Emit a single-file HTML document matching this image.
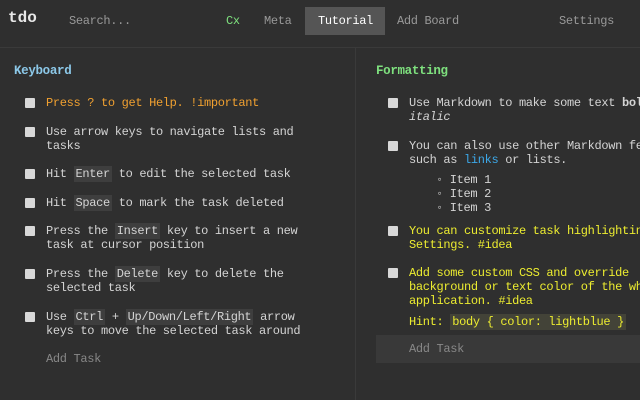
<!DOCTYPE html><html><head><style>
body{margin:0;width:640px;height:400px;background:#2f2f2f;overflow:hidden;font-family:"Liberation Mono",monospace;font-size:12px;letter-spacing:-0.33px;color:#d4d4d4;position:relative}
.a{position:absolute;white-space:pre;line-height:14px}
.cb{position:absolute;width:10px;height:10px;background:#d8d8d8;border-radius:1px}
code{background:#3e3e3e;font-family:inherit;padding:1px 2px}
.o{color:#f0a030}.y{color:#ecec30}.g{color:#888}
</style></head><body>
<div style="position:absolute;left:0;top:47px;width:640px;height:1px;background:#3a3a3a"></div>
<div style="position:absolute;left:355px;top:48px;width:1px;height:352px;background:#3a3a3a"></div>
<div class="a" style="left:8px;top:11px;font-size:16px;font-weight:bold;color:#e8e8e8;letter-spacing:0">tdo</div>
<div class="a" style="left:69px;top:14px;color:#999">Search...</div>
<div class="a" style="left:226px;top:14px;color:#7ee07e">Cx</div>
<div class="a" style="left:264px;top:14px;color:#999">Meta</div>
<div style="position:absolute;left:305px;top:7px;width:80px;height:28px;background:#555"></div>
<div class="a" style="left:318px;top:14px;color:#fff">Tutorial</div>
<div class="a" style="left:397px;top:14px;color:#999">Add Board</div>
<div class="a" style="left:559px;top:14px;color:#999">Settings</div>
<div class="a" style="left:14px;top:64px;color:#8cc8e8;font-weight:bold;font-size:12.5px">Keyboard</div>
<div class="a" style="left:376px;top:64px;color:#7ee07e;font-weight:bold;font-size:12.5px">Formatting</div>

<div class="cb" style="left:25px;top:98px"></div><div class="a o" style="left:46px;top:96px">Press ? to get Help. !important</div>
<div class="cb" style="left:25px;top:127px"></div><div class="a" style="left:46px;top:125px">Use arrow keys to navigate lists and
tasks</div>
<div class="cb" style="left:25px;top:169px"></div><div class="a" style="left:46px;top:167px">Hit <code>Enter</code> to edit the selected task</div>
<div class="cb" style="left:25px;top:198px"></div><div class="a" style="left:46px;top:196px">Hit <code>Space</code> to mark the task deleted</div>
<div class="cb" style="left:25px;top:226px"></div><div class="a" style="left:46px;top:224px">Press the <code>Insert</code> key to insert a new
task at cursor position</div>
<div class="cb" style="left:25px;top:269px"></div><div class="a" style="left:46px;top:267px">Press the <code>Delete</code> key to delete the
selected task</div>
<div class="cb" style="left:25px;top:312px"></div><div class="a" style="left:46px;top:310px">Use <code>Ctrl</code> + <code>Up/Down/Left/Right</code> arrow
keys to move the selected task around</div>
<div class="a g" style="left:46px;top:352px">Add Task</div>

<div class="cb" style="left:388px;top:98px"></div><div class="a" style="left:409px;top:96px">Use Markdown to make some text <b>bold</b> or
<i>italic</i></div>
<div class="cb" style="left:388px;top:141px"></div><div class="a" style="left:409px;top:139px">You can also use other Markdown features
such as <span style="color:#3ca8e8">links</span> or lists.</div>
<div class="a" style="left:436px;top:173px">◦ Item 1
◦ Item 2
◦ Item 3</div>
<div class="cb" style="left:388px;top:226px"></div><div class="a y" style="left:409px;top:224px">You can customize task highlighting in
Settings. #idea</div>
<div class="cb" style="left:388px;top:268px"></div><div class="a y" style="left:409px;top:266px">Add some custom CSS and override
background or text color of the whole
application. #idea</div>
<div class="a y" style="left:409px;top:315px">Hint: <code style="background:#434338">body { color: lightblue }</code></div>
<div style="position:absolute;left:376px;top:335px;width:264px;height:28px;background:#393939"></div>
<div class="a g" style="left:409px;top:342px">Add Task</div>
</body></html>
